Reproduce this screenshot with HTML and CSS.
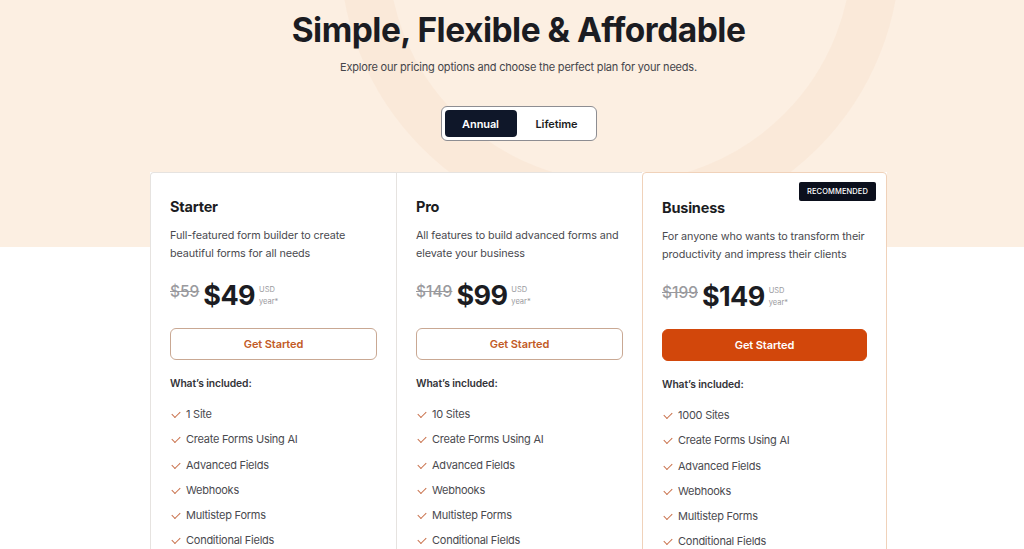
FILE: index.html
```html
<!DOCTYPE html>
<html lang="en">
<head>
    <meta charset="UTF-8">
    <meta name="viewport" content="width=device-width, initial-scale=1.0">
    <title>Pricing</title>
    <link rel="stylesheet" href="styles.css">
</head>
<body>
    <div class="swirl"></div>
    <div class="page">
        <div class="hero">
            <h1>Simple, Flexible &amp; Affordable</h1>
            <p class="subtitle">Explore our pricing options and choose the perfect plan for your needs.</p>
            <div class="toggle">
                <button class="toggle-btn active">Annual</button>
                <button class="toggle-btn">Lifetime</button>
            </div>
        </div>

        <div class="plans">
            <div class="plan">
                <h2>Starter</h2>
                <p class="plan-desc">Full-featured form builder to create beautiful forms for all needs</p>
                <div class="price">
                    <span class="old">$59</span>
                    <span class="amount">$49</span>
                    <span class="unit">USD<br>year*</span>
                </div>
                <a class="cta" href="#">Get Started</a>
                <h3>What’s included:</h3>
                <ul class="features">
                    <li>1 Site</li>
                    <li>Create Forms Using AI</li>
                    <li>Advanced Fields</li>
                    <li>Webhooks</li>
                    <li>Multistep Forms</li>
                    <li>Conditional Fields</li>
                </ul>
            </div>

            <div class="plan">
                <h2>Pro</h2>
                <p class="plan-desc">All features to build advanced forms and elevate your business</p>
                <div class="price">
                    <span class="old">$149</span>
                    <span class="amount">$99</span>
                    <span class="unit">USD<br>year*</span>
                </div>
                <a class="cta" href="#">Get Started</a>
                <h3>What’s included:</h3>
                <ul class="features">
                    <li>10 Sites</li>
                    <li>Create Forms Using AI</li>
                    <li>Advanced Fields</li>
                    <li>Webhooks</li>
                    <li>Multistep Forms</li>
                    <li>Conditional Fields</li>
                </ul>
            </div>

            <div class="plan featured">
                <span class="badge">RECOMMENDED</span>
                <h2>Business</h2>
                <p class="plan-desc">For anyone who wants to transform their productivity and impress their clients</p>
                <div class="price">
                    <span class="old">$199</span>
                    <span class="amount">$149</span>
                    <span class="unit">USD<br>year*</span>
                </div>
                <a class="cta primary" href="#">Get Started</a>
                <h3>What’s included:</h3>
                <ul class="features">
                    <li>1000 Sites</li>
                    <li>Create Forms Using AI</li>
                    <li>Advanced Fields</li>
                    <li>Webhooks</li>
                    <li>Multistep Forms</li>
                    <li>Conditional Fields</li>
                </ul>
            </div>
        </div>
    </div>
</body>
</html>
```

FILE: styles.css
```css
:root {
    --peach: #fcefe2;
    --ink: #1b1c22;
    --text: #4a4a4f;
    --orange: #d2470b;
    --orange-text: #c25a25;
    --line: #e6e3e0;
}

* {
    box-sizing: border-box;
    margin: 0;
    padding: 0;
}

body {
    font-family: "Inter", "Noto Sans", sans-serif;
    color: var(--ink);
    background: linear-gradient(var(--peach) 0 247px, #fff 247px);
    min-height: 100vh;
    overflow: hidden;
    position: relative;
}

/* faint decorative ring behind the hero */
.swirl {
    position: absolute;
    left: 340px;
    top: -330px;
    width: 560px;
    height: 560px;
    border-radius: 50%;
    border: 48px solid rgba(240, 205, 175, 0.16);
    z-index: 0;
}

.page {
    position: relative;
    z-index: 1;
    width: 737px;
    margin-left: 150px;
}

.hero {
    display: flex;
    flex-direction: column;
    align-items: center;
    padding-top: 8px;
}

h1 {
    font-size: 33.5px;
    font-weight: 700;
    letter-spacing: -0.5px;
    line-height: 44px;
}

.subtitle {
    margin-top: 8px;
    font-size: 11px;
    letter-spacing: -0.2px;
    color: #45454a;
}

.toggle {
    margin-top: 32px;
    display: flex;
    padding: 3px;
    gap: 4px;
    background: #fff;
    border: 1px solid #8d8d92;
    border-radius: 6px;
}

.toggle-btn {
    font-family: inherit;
    font-size: 11px;
    font-weight: 600;
    letter-spacing: -0.1px;
    color: var(--ink);
    background: none;
    border: none;
    border-radius: 4px;
    width: 72px;
    height: 27px;
}

.toggle-btn.active {
    background: #0f1729;
    color: #fff;
}

.plans {
    margin-top: 31px;
    display: grid;
    grid-template-columns: 246px 246px 245px;
    background: #fff;
}

.plan {
    position: relative;
    padding: 24px 19px 0 19px;
    border: 1px solid var(--line);
    border-right: none;
    border-bottom: none;
    border-radius: 4px 0 0 0;
    background: #fff;
    height: 400px;
}

.plan:nth-child(2) {
    border-radius: 0;
}

.plan.featured {
    border: 1px solid #f0d2ba;
    border-radius: 4px;
    padding-top: 25px;
}

.badge {
    position: absolute;
    top: 9px;
    right: 10px;
    background: #0b0f1c;
    color: #fff;
    font-size: 7.5px;
    font-weight: 500;
    letter-spacing: 0.1px;
    padding: 5px 8px;
    border-radius: 2px;
}

h2 {
    font-size: 14.5px;
    font-weight: 700;
    letter-spacing: -0.2px;
    line-height: 20px;
}

.plan-desc {
    margin-top: 10px;
    font-size: 10.8px;
    letter-spacing: -0.1px;
    line-height: 18px;
    color: var(--text);
}

.price {
    margin-top: 18px;
    display: flex;
    align-items: flex-start;
    gap: 4px;
}

.old {
    font-size: 15.5px;
    font-weight: 500;
    color: #9a9a9e;
    text-decoration: line-through;
    line-height: 22px;
}

.amount {
    font-size: 27px;
    font-weight: 700;
    letter-spacing: -0.6px;
    line-height: 30px;
}

.unit {
    font-size: 7.5px;
    line-height: 12px;
    color: #9a9a9e;
    margin-top: 3px;
}

.cta {
    display: flex;
    align-items: center;
    justify-content: center;
    margin-top: 17px;
    height: 32px;
    border: 1px solid #c9a893;
    border-radius: 6px;
    font-size: 11px;
    font-weight: 600;
    letter-spacing: -0.1px;
    color: var(--orange-text);
    text-decoration: none;
}

.cta.primary {
    background: var(--orange);
    border-color: var(--orange);
    color: #fff;
}

h3 {
    margin-top: 17px;
    font-size: 10.3px;
    font-weight: 600;
    letter-spacing: -0.1px;
    color: #333338;
}

.features {
    list-style: none;
    margin-top: 13px;
}

.features li {
    position: relative;
    padding-left: 16px;
    font-size: 11px;
    letter-spacing: -0.25px;
    line-height: 25.3px;
    color: var(--text);
}

.features li::before {
    content: "";
    position: absolute;
    left: 2px;
    top: 9px;
    width: 7px;
    height: 4px;
    border-left: 1.3px solid #c8704a;
    border-bottom: 1.3px solid #c8704a;
    transform: rotate(-45deg);
}
```
